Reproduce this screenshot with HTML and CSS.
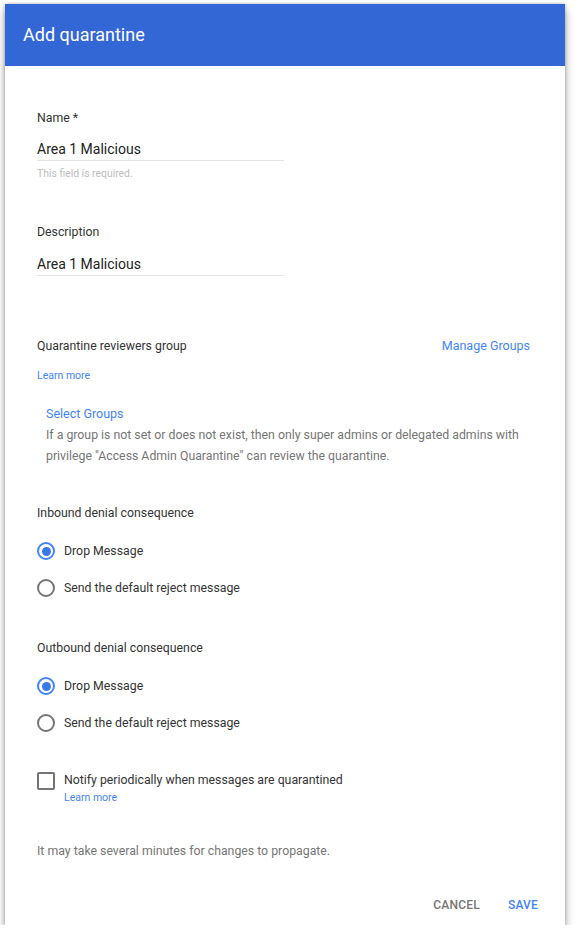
FILE: index.html
```html
<!DOCTYPE html>
<html>
<head>
<meta charset="utf-8">
<link rel="stylesheet" href="styles.css">
</head>
<body>
<div class="dialog">
  <div class="header">Add quarantine</div>
  <div class="content">
    <div class="field">
      <div class="label">Name *</div>
      <div class="input">Area 1 Malicious</div>
      <div class="hint">This field is required.</div>
    </div>
    <div class="field field-desc">
      <div class="label">Description</div>
      <div class="input">Area 1 Malicious</div>
    </div>

    <div class="group-row">
      <div class="label">Quarantine reviewers group</div>
      <a class="manage">Manage Groups</a>
    </div>
    <a class="small-link learn1">Learn more</a>
    <div class="select-block">
      <a class="select">Select Groups</a>
      <p class="note">If a group is not set or does not exist, then only super admins or delegated admins with privilege "Access Admin Quarantine" can review the quarantine.</p>
    </div>

    <div class="radio-group">
      <div class="label">Inbound denial consequence</div>
      <div class="radios">
        <div class="radio-row"><span class="radio checked"></span><span class="rtext">Drop Message</span></div>
        <div class="radio-row"><span class="radio"></span><span class="rtext">Send the default reject message</span></div>
      </div>
    </div>

    <div class="radio-group out">
      <div class="label">Outbound denial consequence</div>
      <div class="radios">
        <div class="radio-row"><span class="radio checked"></span><span class="rtext">Drop Message</span></div>
        <div class="radio-row"><span class="radio"></span><span class="rtext">Send the default reject message</span></div>
      </div>
    </div>

    <div class="check-row">
      <span class="checkbox"></span>
      <div class="check-text">
        <div class="rtext">Notify periodically when messages are quarantined</div>
        <a class="small-link">Learn more</a>
      </div>
    </div>

    <div class="propagate">It may take several minutes for changes to propagate.</div>
  </div>
  <div class="actions">
    <button class="btn cancel">CANCEL</button>
    <button class="btn save">SAVE</button>
  </div>
</div>
</body>
</html>
```

FILE: styles.css
```css
* { box-sizing: border-box; }
html, body { margin: 0; padding: 0; background: #fff; }
body { font-family: Roboto, "Noto Sans", Arial, sans-serif; color: #212121; }

.dialog {
  margin: 4px 0 0 5px;
  width: 560px;
  height: 921px;
  background: #fff;
  box-shadow: 0 5px 9px rgba(0,0,0,0.35), 0 0 3px rgba(0,0,0,0.25);
  display: flex;
  flex-direction: column;
}

.header {
  height: 62px;
  background: #3367d6;
  color: #fff;
  font-size: 18px;
  padding-left: 18px;
  display: flex;
  align-items: center;
  padding-bottom: 2px;
}

.content {
  padding: 44px 32px 0 32px;
  flex: 1;
  display: flex;
  flex-direction: column;
  align-items: flex-start;
}

.label {
  font-size: 12.3px;
  line-height: 16px;
  color: #333;
}

.field { display: flex; flex-direction: column; }
.input {
  margin-top: 13px;
  width: 247px;
  font-size: 14px;
  line-height: 20px;
  padding-bottom: 1px;
  border-bottom: 1px solid #e3e3e3;
  color: #222;
}
.hint {
  margin-top: 6px;
  font-size: 10.4px;
  line-height: 14px;
  color: #bdbdbd;
}
.field-desc { margin-top: 43px; }
.field-desc .input { margin-top: 14px; }

.group-row {
  margin-top: 62px;
  width: 100%;
  display: flex;
  justify-content: space-between;
  align-items: center;
}
.manage {
  color: #4285f4;
  font-size: 12.5px;
  line-height: 16px;
  margin-right: 3px;
}
.small-link {
  color: #4285f4;
  font-size: 10.5px;
  line-height: 14px;
}
.learn1 { margin-top: 15px; }

.select-block { margin-top: 22px; padding-left: 9px; }
.select {
  display: block;
  color: #4285f4;
  font-size: 12.5px;
  line-height: 18px;
}
.note {
  margin: 2px 0 0 0;
  font-size: 12.3px;
  line-height: 21px;
  color: #757575;
  width: 480px;
}

.radio-group { margin-top: 38px; }
.radio-group.out { margin-top: 34px; }
.radios { margin-top: 12px; display: flex; flex-direction: column; }
.radio-row {
  height: 36px;
  display: flex;
  align-items: center;
}
.radio-row + .radio-row { height: 37px; }
.radio {
  width: 18px;
  height: 18px;
  border: 2px solid #757575;
  border-radius: 50%;
  margin-right: 9px;
  display: flex;
  align-items: center;
  justify-content: center;
  flex: none;
}
.radio.checked { border-color: #4285f4; }
.radio.checked::after {
  content: "";
  width: 9px;
  height: 9px;
  border-radius: 50%;
  background: #3b78e7;
}
.rtext {
  font-size: 12.3px;
  line-height: 16px;
  color: #333;
}

.check-row {
  margin-top: 31px;
  display: flex;
  align-items: flex-start;
}
.checkbox {
  width: 18px;
  height: 18px;
  border: 2px solid #757575;
  border-radius: 2px;
  margin-right: 9px;
  flex: none;
}
.check-text { display: flex; flex-direction: column; padding-top: 0; }
.check-text .small-link { margin-top: 3px; }

.propagate {
  margin-top: 38px;
  font-size: 12.3px;
  line-height: 16px;
  color: #757575;
}

.actions {
  display: flex;
  justify-content: flex-end;
  align-items: center;
  gap: 28px;
  padding: 0 27px 0 0;
  height: 40px;
}
.btn {
  border: none;
  background: none;
  padding: 0;
  font-family: Roboto, "Noto Sans", Arial, sans-serif;
  font-size: 12px;
  font-weight: 500;
  letter-spacing: 0.2px;
}
.cancel { color: #757575; }
.save { color: #4285f4; }
```
